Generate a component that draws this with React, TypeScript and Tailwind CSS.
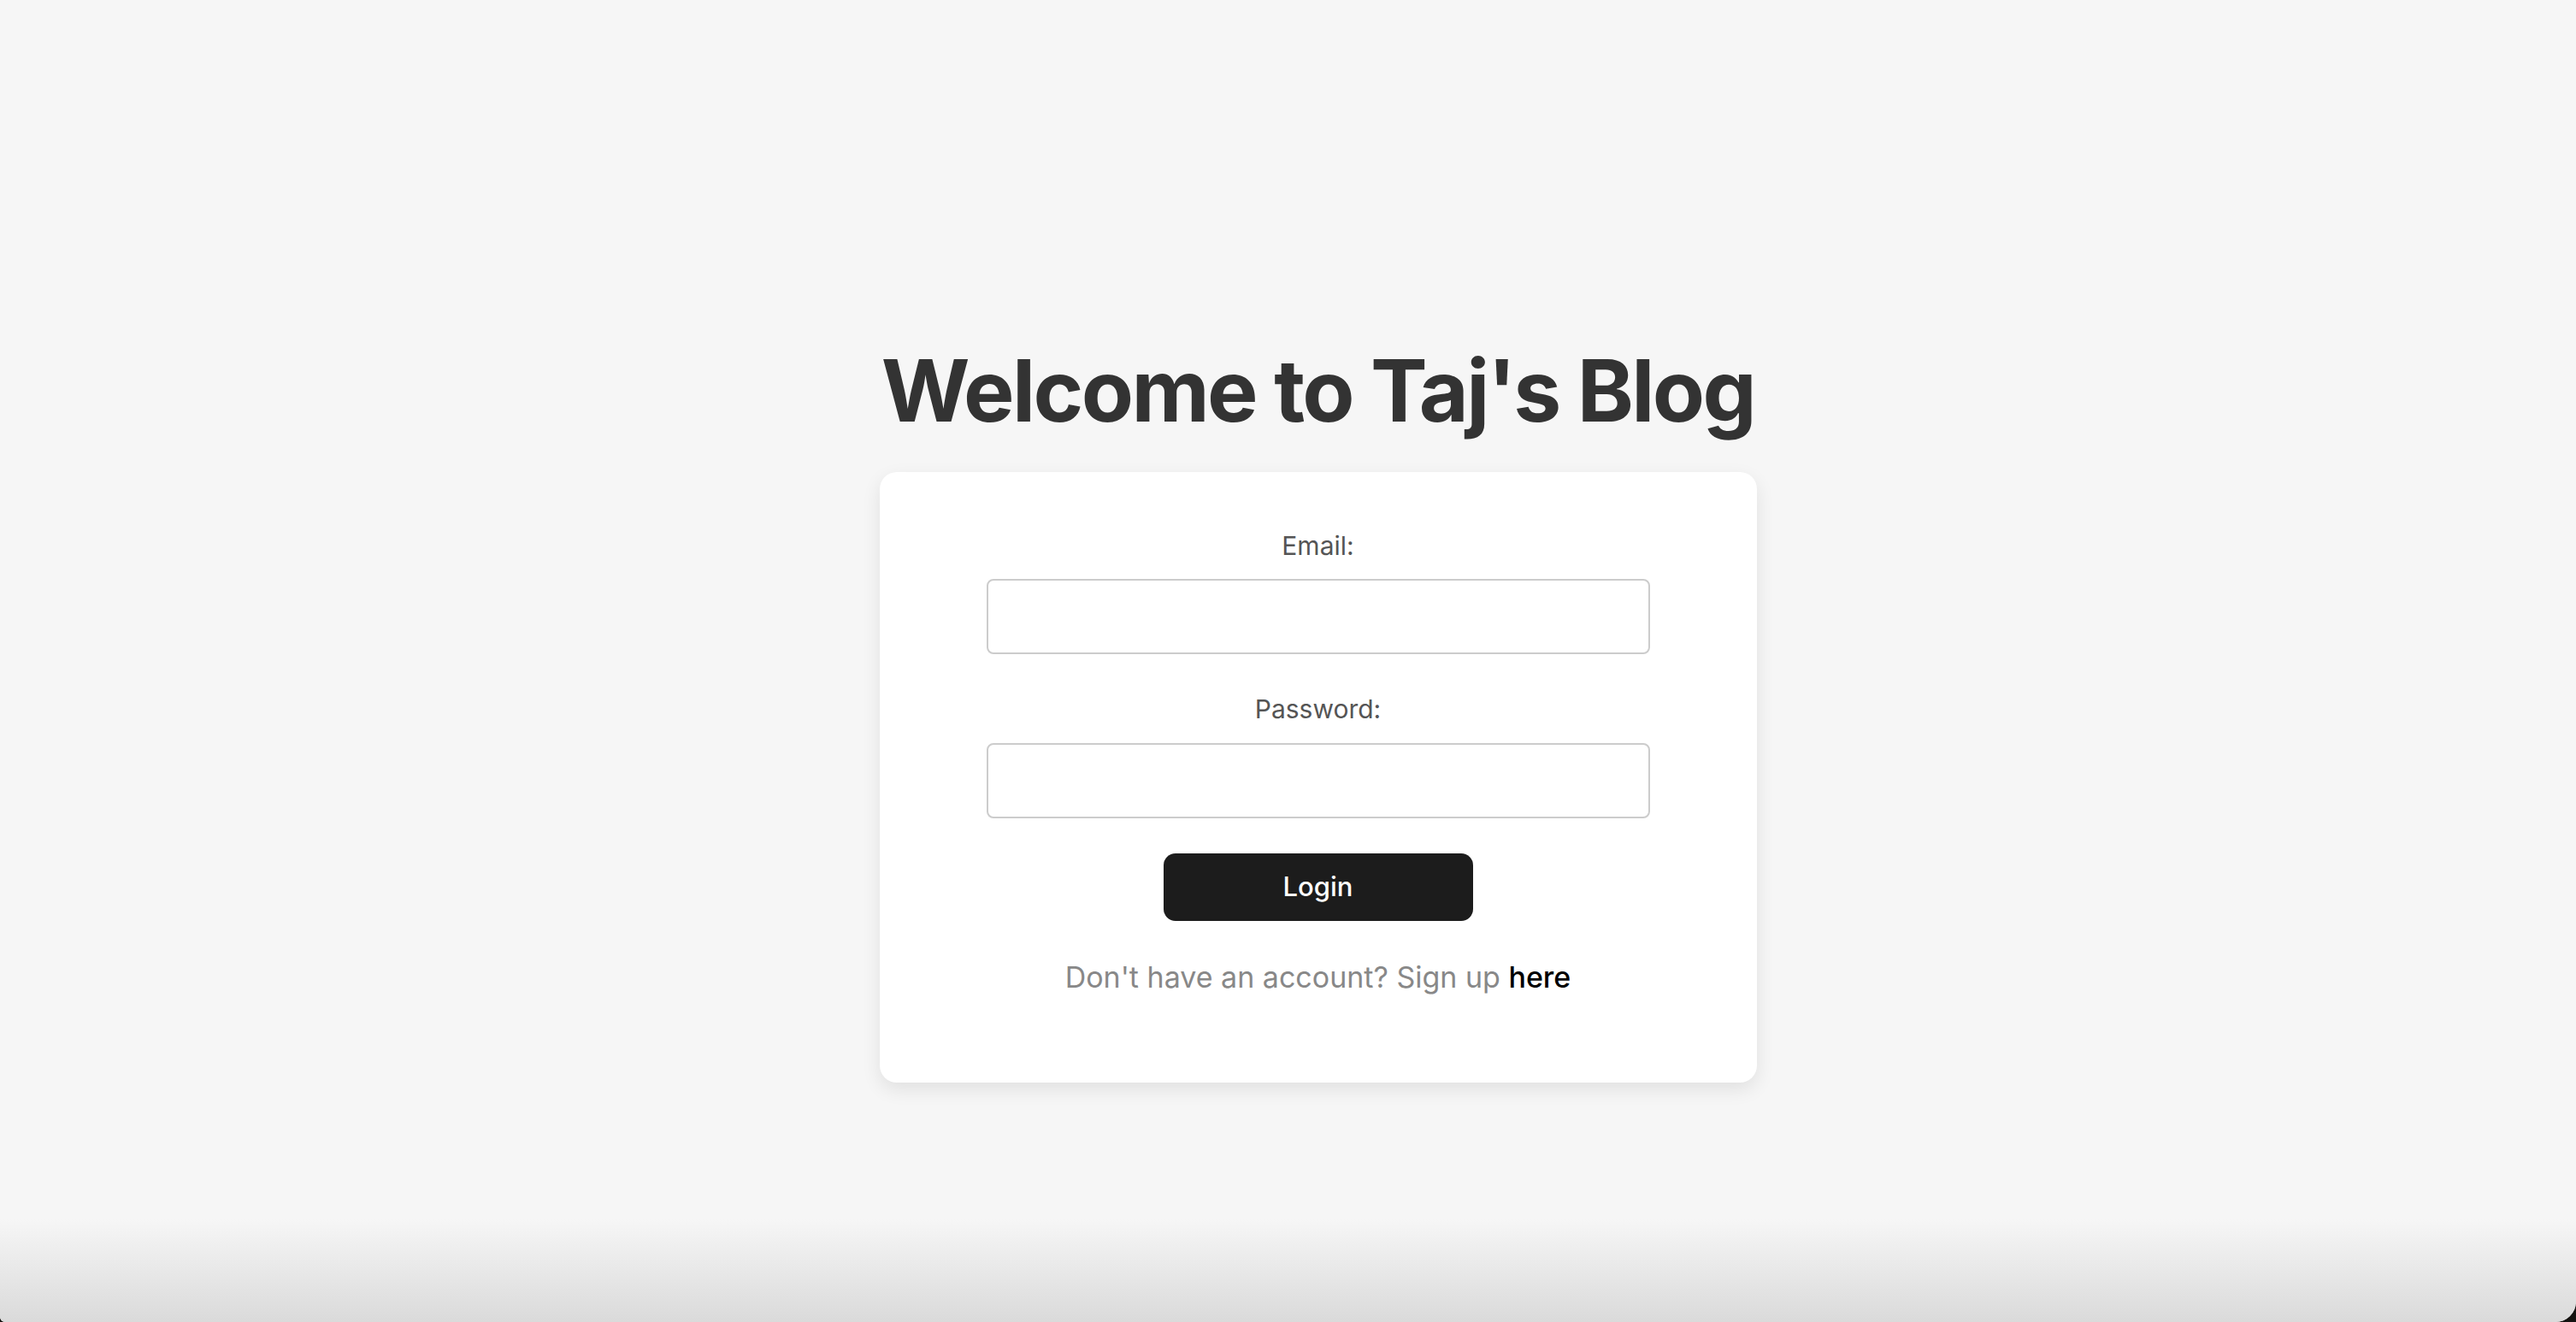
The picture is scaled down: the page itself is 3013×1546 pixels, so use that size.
import { useState } from 'react';

export default function App() {
  const [email, setEmail] = useState('');
  const [password, setPassword] = useState('');

  return (
    <div className="bg-[#141210] font-['Inter',_'Liberation_Sans',_sans-serif]">
      <div className="relative min-h-[1546px] overflow-hidden rounded-br-[24px] rounded-bl-[6px] bg-[#f6f6f6] flex flex-col items-center pt-[397px] pl-[70px]">
        <h1 className="text-[100px] leading-[120px] font-bold tracking-[-0.026em] text-[#333333]">
          Welcome to Taj's Blog
        </h1>

        {/* Login card */}
        <form
          onSubmit={(e) => e.preventDefault()}
          className="mt-[35px] w-[1026px] rounded-[20px] bg-white shadow-[0_8px_22px_rgba(0,0,0,0.09)] flex flex-col items-center pt-[68px] pb-[101px]"
        >
          <label htmlFor="email" className="text-[30px] leading-[36px] text-[#555555]">
            Email:
          </label>
          <input
            id="email"
            type="email"
            value={email}
            onChange={(e) => setEmail(e.target.value)}
            className="mt-[21px] w-[776px] h-[88px] rounded-[8px] border-2 border-[#cccccc] bg-white px-5 text-[28px] outline-none"
          />

          <label htmlFor="password" className="mt-[46px] text-[30px] leading-[36px] text-[#555555]">
            Password:
          </label>
          <input
            id="password"
            type="password"
            value={password}
            onChange={(e) => setPassword(e.target.value)}
            className="mt-[22px] w-[776px] h-[88px] rounded-[8px] border-2 border-[#cccccc] bg-white px-5 text-[28px] outline-none"
          />

          <button
            type="submit"
            className="mt-[41px] w-[362px] h-[79px] rounded-[14px] bg-[#1c1c1c] text-white text-[31px] font-medium"
          >
            Login
          </button>

          <p className="mt-[44px] text-[34px] leading-[44px] text-[#888888]">
            Don't have an account? Sign up <a href="#" className="text-black font-medium">here</a>
          </p>
        </form>

        {/* window edge shade */}
        <div className="pointer-events-none absolute bottom-0 left-0 right-0 h-[120px] bg-gradient-to-b from-transparent to-[#dadada]"></div>
      </div>
    </div>
  );
}
